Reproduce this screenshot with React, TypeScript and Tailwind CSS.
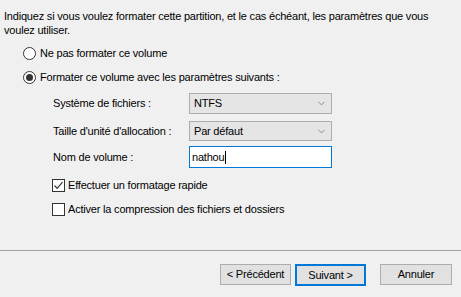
import { ChevronDown } from 'lucide-react';

function Radio({ checked, label }: { checked?: boolean; label: string }) {
  return (
    <div className="flex h-[24px] items-center">
      <span className="flex h-[13px] w-[13px] items-center justify-center rounded-full border border-[#333333] bg-white">
        {checked && <span className="h-[7px] w-[7px] rounded-full bg-[#333333]" />}
      </span>
      <span className="ml-[4px]">{label}</span>
    </div>
  );
}

function Check({ checked, label }: { checked?: boolean; label: string }) {
  return (
    <div className="flex h-[24px] items-center">
      <span className="flex h-[13px] w-[13px] items-center justify-center border border-[#333333] bg-white">
        {checked && (
          <svg width="11" height="11" viewBox="0 0 11 11" fill="none">
            <path d="M1.5 5.5 L4.2 8.3 L9.5 2.2" stroke="#333333" strokeWidth="1.2" />
          </svg>
        )}
      </span>
      <span className="ml-[3px]">{label}</span>
    </div>
  );
}

function Combo({ value, className }: { value: string; className?: string }) {
  return (
    <div className={`flex w-[143px] items-center justify-between border border-[#adadad] bg-[#e5e5e5] pl-[4px] pr-[4px] ${className}`}>
      <span>{value}</span>
      <ChevronDown className="h-[11px] w-[11px] text-[#606060]" strokeWidth={1.5} />
    </div>
  );
}

export default function App() {
  return (
    <div className="flex h-[297px] w-[461px] flex-col bg-[#f0f0f0] text-[11px] text-black" style={{ fontFamily: '"Liberation Sans", Arial, sans-serif' }}>
      <p className="px-[4px] pt-[9px] leading-[14px] tracking-[-0.2px]">
        Indiquez si vous voulez formater cette partition, et le cas échéant, les paramètres que vous
        voulez utiliser.
      </p>

      <div className="ml-[23px] mt-[4px] tracking-[-0.2px]">
        <Radio label="Ne pas formater ce volume" />
        <Radio checked label="Formater ce volume avec les paramètres suivants :" />
      </div>

      <div className="ml-[53px] grid grid-cols-[136px_143px] tracking-[-0.2px]">
        <span className="mt-[4px] flex h-[21px] items-center">Système de fichiers :</span>
        <Combo value="NTFS" className="mt-[4px] h-[21px]" />
        <span className="mt-[7px] flex h-[20px] items-center">Taille d'unité d'allocation :</span>
        <Combo value="Par défaut" className="mt-[7px] h-[20px]" />
        <span className="mt-[5px] flex h-[22px] items-center">Nom de volume :</span>
        <div className="mt-[5px] flex h-[22px] w-[143px] items-center border border-[#0078d7] bg-white pl-[2px]">
          <span>nathou</span>
          <span className="ml-[1px] h-[13px] w-px bg-black" />
        </div>
      </div>

      <div className="ml-[52px] mt-[5px] tracking-[-0.2px]">
        <Check checked label="Effectuer un formatage rapide" />
        <Check label="Activer la compression des fichiers et dossiers" />
      </div>

      <div className="mt-auto border-t border-[#a0a0a0]" />
      <div className="flex h-[46px] justify-end pr-[9px] pt-[13px] tracking-[-0.2px]">
        <button className="h-[21px] w-[71px] border border-[#adadad] bg-[#e1e1e1]">&lt; Précédent</button>
        <button className="ml-[4px] h-[22px] w-[71px] border-2 border-[#0078d7] bg-[#e1e1e1]">Suivant &gt;</button>
        <button className="ml-[14px] h-[21px] w-[72px] border border-[#adadad] bg-[#e1e1e1]">Annuler</button>
      </div>
    </div>
  );
}
